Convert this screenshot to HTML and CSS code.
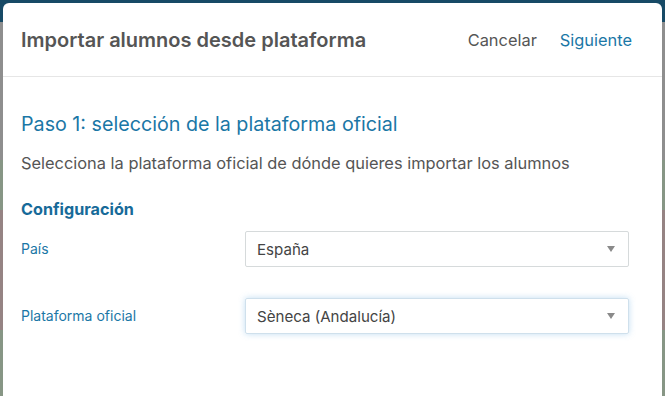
FILE: index.html
```html
<!DOCTYPE html>
<html lang="es">
<head>
    <meta charset="UTF-8">
    <meta name="viewport" content="width=device-width, initial-scale=1.0">
    <title>Importar alumnos desde plataforma</title>
    <link rel="stylesheet" href="styles.css">
</head>
<body>
    <div class="backdrop">
        <div class="modal">
            <header class="modal-header">
                <h1>Importar alumnos desde plataforma</h1>
                <div class="actions">
                    <button class="btn-cancel">Cancelar</button>
                    <button class="btn-next">Siguiente</button>
                </div>
            </header>

            <main class="modal-body">
                <h2>Paso 1: selección de la plataforma oficial</h2>
                <p class="intro">Selecciona la plataforma oficial de dónde quieres importar los alumnos</p>

                <h3>Configuración</h3>

                <div class="form-row">
                    <label>País</label>
                    <div class="select">
                        <span>España</span>
                        <i class="caret"></i>
                    </div>
                </div>

                <div class="form-row">
                    <label>Plataforma oficial</label>
                    <div class="select focused">
                        <span>Sèneca (Andalucía)</span>
                        <i class="caret"></i>
                    </div>
                </div>
            </main>
        </div>
    </div>
</body>
</html>
```

FILE: styles.css
```css
/* base */
* {
    margin: 0;
    padding: 0;
    box-sizing: border-box;
    font-family: Inter, 'Noto Sans', sans-serif;
}

body {
    height: 396px;
    overflow: hidden;
    background: linear-gradient(to bottom,
        #174a66 0, #174a66 22px,
        #8e8e8e 22px, #8e8e8e 160px,
        #879685 160px, #879685 210px,
        #958383 210px, #958383 330px,
        #879685 330px);
}

.backdrop {
    padding: 3px 3px 0;
}

/* modal */
.modal {
    background-color: #fff;
    border-radius: 6px 6px 0 0;
    height: 393px;
}

.modal-header {
    display: flex;
    align-items: center;
    justify-content: space-between;
    height: 74px;
    padding: 0 30px 0 18px;
    border-bottom: 1px solid #e6e6e6;
}

.modal-header h1 {
    font-size: 20px;
    font-weight: 600;
    color: #555;
}

.actions {
    display: flex;
    gap: 23px;
}

.actions button {
    background: none;
    border: none;
    font-size: 16.4px;
    cursor: pointer;
}

.btn-cancel {
    color: #555;
}

.btn-next {
    color: #1b77a6;
}

/* body */
.modal-body {
    padding: 34px 18px 0;
}

.modal-body h2 {
    font-size: 19.7px;
    font-weight: 400;
    color: #1b77a6;
    line-height: 26px;
}

.intro {
    margin-top: 14px;
    font-size: 16.4px;
    color: #555;
    line-height: 24px;
}

.modal-body h3 {
    margin-top: 22px;
    font-size: 16.2px;
    font-weight: 700;
    color: #176a99;
    line-height: 24px;
}

.form-row {
    display: grid;
    grid-template-columns: 224px 384px;
    align-items: center;
    margin-top: 10px;
}

.form-row + .form-row {
    margin-top: 31px;
}

.form-row label {
    font-size: 14px;
    color: #1b77a6;
    padding-bottom: 2px;
}

.select {
    display: flex;
    align-items: center;
    justify-content: space-between;
    height: 36px;
    padding: 0 13px 0 11px;
    border: 1px solid #d6dadb;
    border-radius: 2px;
    font-size: 15.1px;
    color: #444;
}

.select.focused {
    border-color: #cfe0ec;
    box-shadow: 0 0 6px rgba(80, 160, 220, 0.35);
}

.caret {
    width: 0;
    height: 0;
    border-left: 4px solid transparent;
    border-right: 4px solid transparent;
    border-top: 6px solid #8a8a8a;
}
```
